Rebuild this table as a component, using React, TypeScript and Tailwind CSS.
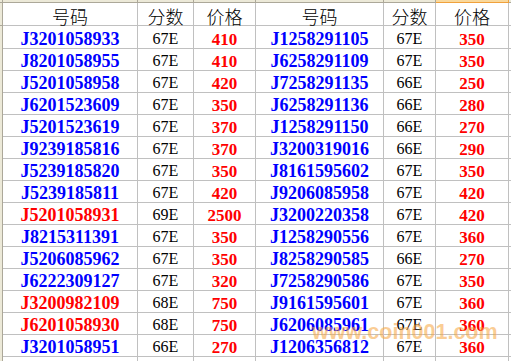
import React from "react";

type Row = { code: string; hot?: boolean; score: string; price: string };

const left: Row[] = [
  { code: "J3201058933", score: "67E", price: "410" },
  { code: "J8201058955", score: "67E", price: "410" },
  { code: "J5201058958", score: "67E", price: "420" },
  { code: "J6201523609", score: "67E", price: "350" },
  { code: "J5201523619", score: "67E", price: "370" },
  { code: "J9239185816", score: "67E", price: "370" },
  { code: "J5239185820", score: "67E", price: "350" },
  { code: "J5239185811", score: "67E", price: "420" },
  { code: "J5201058931", hot: true, score: "69E", price: "2500" },
  { code: "J8215311391", score: "67E", price: "350" },
  { code: "J5206085962", score: "67E", price: "350" },
  { code: "J6222309127", score: "67E", price: "320" },
  { code: "J3200982109", hot: true, score: "68E", price: "750" },
  { code: "J6201058930", hot: true, score: "68E", price: "750" },
  { code: "J3201058951", score: "66E", price: "270" },
];

const right: Row[] = [
  { code: "J1258291105", score: "67E", price: "350" },
  { code: "J6258291109", score: "67E", price: "350" },
  { code: "J7258291135", score: "66E", price: "250" },
  { code: "J6258291136", score: "66E", price: "280" },
  { code: "J1258291150", score: "66E", price: "270" },
  { code: "J3200319016", score: "66E", price: "290" },
  { code: "J8161595602", score: "67E", price: "350" },
  { code: "J9206085958", score: "67E", price: "420" },
  { code: "J3200220358", score: "67E", price: "420" },
  { code: "J1258290556", score: "67E", price: "360" },
  { code: "J8258290585", score: "66E", price: "270" },
  { code: "J7258290586", score: "67E", price: "350" },
  { code: "J9161595601", score: "67E", price: "360" },
  { code: "J6206085961", score: "67E", price: "360" },
  { code: "J1206356812", score: "67E", price: "360" },
];

const cols = "grid grid-cols-[3px_135px_56px_62px_128px_52px_73px_1fr]";
const cell = "flex items-center justify-center border-r border-b border-[#c0c0c0] whitespace-nowrap";
const code = "font-['Liberation_Serif',serif] font-bold text-[18px] leading-[18px] pt-[4px]";
const score = "font-['Liberation_Serif',serif] text-[16px] leading-[16px] text-black pt-[4px]";
const price = "font-['Liberation_Serif',serif] font-bold text-[17px] leading-[17px] text-[#ff0000] pt-[4px]";
const head = "flex items-end justify-center border-r border-b border-[#c0c0c0] font-['Noto_Sans_CJK_SC',sans-serif] font-light text-[18px] leading-[18px] text-black";

function DataRow({ l, r }: { l: Row; r: Row }) {
  return (
    <div className={`${cols} h-[22px]`}>
      <div className="bg-[#ece9d8] border-r border-b border-[#aca899]" />
      <div className={`${cell} ${code} ${l.hot ? "text-[#ff0000]" : "text-[#0000ff]"}`}>{l.code}</div>
      <div className={`${cell} ${score}`}>{l.score}</div>
      <div className={`${cell} ${price}`}>{l.price}</div>
      <div className={`${cell} ${code} ${r.hot ? "text-[#ff0000]" : "text-[#0000ff]"}`}>{r.code}</div>
      <div className={`${cell} ${score}`}>{r.score}</div>
      <div className={`${cell} ${price}`}>{r.price}</div>
      <div className="border-b border-[#c0c0c0]" />
    </div>
  );
}

export default function App() {
  return (
    <div className="relative w-[511px] h-[361px] overflow-hidden bg-white">
      {/* column header strip */}
      <div className={`${cols} h-[3px]`}>
        <div className="bg-[#ece9d8] border-r border-b border-[#aca899]" />
        <div className="bg-[#ece9d8] border-r border-b border-[#aca899]" />
        <div className="bg-[#ece9d8] border-r border-b border-[#aca899]" />
        <div className="bg-[#ece9d8] border-r border-b border-[#aca899]" />
        <div className="bg-[#ece9d8] border-r border-b border-[#aca899]" />
        <div className="bg-[#ece9d8] border-r border-b border-[#aca899]" />
        <div className="bg-[#f9d89c] border-r border-b border-[#f0a13c]" />
        <div className="bg-[#ece9d8] border-b border-[#aca899]" />
      </div>

      <div className={`${cols} h-[23px]`}>
        <div className="bg-[#ece9d8] border-r border-b border-[#aca899]" />
        <div className={head}>号码</div>
        <div className={head}>分数</div>
        <div className={head}>价格</div>
        <div className={head}>号码</div>
        <div className={head}>分数</div>
        <div className={head}>价格</div>
        <div className="border-b border-[#c0c0c0]" />
      </div>

      {left.map((l, i) => (
        <DataRow key={l.code} l={l} r={right[i]} />
      ))}
      <div className={`${cols} h-[22px]`}>
        <div className="bg-[#ece9d8] border-r border-[#aca899]" />
        <div className="border-r border-[#c0c0c0]" />
        <div className="border-r border-[#c0c0c0]" />
        <div className="border-r border-[#c0c0c0]" />
        <div className="border-r border-[#c0c0c0]" />
        <div className="border-r border-[#c0c0c0]" />
        <div className="border-r border-[#c0c0c0]" />
        <div />
      </div>

      {/* watermark */}
      <div className="absolute left-[312px] top-[322px] font-['Liberation_Sans',sans-serif] font-bold text-[21.5px] leading-none text-[#f7a640] opacity-55 pointer-events-none">
        www.coin001.com
      </div>
    </div>
  );
}
